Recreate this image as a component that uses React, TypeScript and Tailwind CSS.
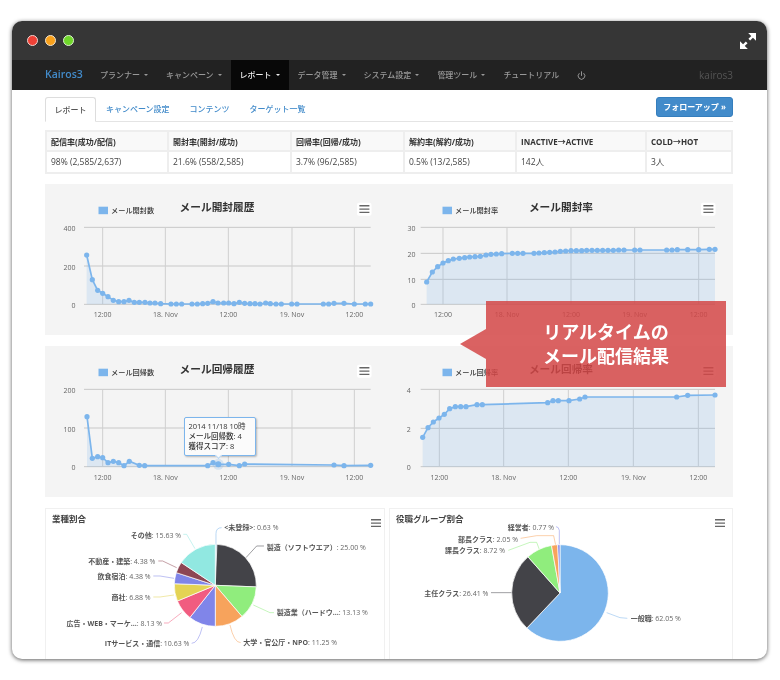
import { Power } from "lucide-react"

type Pt = number[]

const navItems = [
  { label: "プランナー", caret: true },
  { label: "キャンペーン", caret: true },
  { label: "レポート", caret: true, active: true },
  { label: "データ管理", caret: true },
  { label: "システム設定", caret: true },
  { label: "管理ツール", caret: true },
  { label: "チュートリアル" },
]

const summary = [
  ["配信率(成功/配信)", "98% (2,585/2,637)"],
  ["開封率(開封/成功)", "21.6% (558/2,585)"],
  ["回帰率(回帰/成功)", "3.7% (96/2,585)"],
  ["解約率(解約/成功)", "0.5% (13/2,585)"],
  ["INACTIVE→ACTIVE", "142人"],
  ["COLD→HOT", "3人"],
]

// chart data is kept in 3x coordinates, as measured
const openCount: Pt[] = [[140,210],[157,284],[173,316],[188,325],[204,335],[220,346],[236,350],[252,350],[267,346],[283,352],[298,352],[315,352],[330,354],[345,354],[362,356],[393,357],[409,357],[425,357],[456,357],[472,357],[488,356],[503,355],[519,350],[534,354],[551,354],[566,354],[582,356],[598,352],[614,355],[630,356],[645,356],[660,357],[677,354],[691,356],[708,357],[724,357],[755,357],[771,357],[850,357],[866,357],[882,355],[912,355],[943,357],[976,357],[992,357]]
const openRate: Pt[] = [[110,291],[127,261],[143,245],[159,234],[175,227],[190,222],[208,220],[224,218],[239,216],[255,215],[271,214],[288,210],[303,208],[319,207],[335,206],[367,205],[383,205],[399,205],[432,205],[447,204],[463,203],[479,202],[495,201],[511,199],[527,198],[543,197],[559,197],[575,197],[590,196],[606,196],[622,196],[638,196],[654,196],[670,196],[686,195],[702,195],[734,195],[750,195],[830,195],[846,195],[862,194],[893,194],[926,194],[958,193],[975,193]]
const returnCount: Pt[] = [[141,215],[157,340],[173,335],[188,338],[204,353],[220,349],[236,353],[252,362],[268,349],[298,361],[314,362],[503,362],[519,353],[535,358],[566,358],[598,362],[614,357],[882,360],[912,362],[992,361]]
const returnRate: Pt[] = [[98,157],[114,128],[130,111],[147,99],[163,88],[179,71],[196,65],[212,65],[228,65],[261,59],[277,59],[473,53],[489,47],[505,47],[537,47],[569,42],[585,36],[860,36],[893,31],[975,30]]

const xLabels = ["12:00", "18. Nov", "12:00", "19. Nov", "12:00"]

type ChartProps = {
  title: string
  legend: string
  data: Pt[]
  dx: number
  dy: number
  gridY: number[]
  gridX: number[]
  left: number
  right: number
  yLabels: string[]
  labelEnd: number
  hover?: Pt
}

function MenuIcon({ x, y }: { x: number; y: number }) {
  return (
    <g stroke="#666" strokeWidth="1.4">
      <line x1={x} x2={x + 10} y1={y} y2={y} />
      <line x1={x} x2={x + 10} y1={y + 3.3} y2={y + 3.3} />
      <line x1={x} x2={x + 10} y1={y + 6.6} y2={y + 6.6} />
    </g>
  )
}

function LineChart({ title, legend, data, dx, dy, gridY, gridX, left, right, yLabels, labelEnd, hover }: ChartProps) {
  const sx = (v: number) => v / 3 + dx
  const sy = (v: number) => v / 3 + dy
  const base = sy(gridY[gridY.length - 1])
  const line = data.map((p) => `${sx(p[0])},${sy(p[1])}`).join(" ")
  const area = `${sx(data[0][0])},${base} ${line} ${sx(data[data.length - 1][0])},${base}`

  return (
    <svg width="344" height="151" className="block">
      <text x="172" y="27" textAnchor="middle" fontSize="10.7" fontWeight="700" fill="#333">{title}</text>
      <rect x="53.5" y="22.7" width="9.5" height="7.5" fill="#7cb5ec" />
      <text x="66" y="29.3" fontSize="7.2" fontWeight="500" fill="#333">{legend}</text>
      <rect x="312" y="18.7" width="14.5" height="13" rx="2" fill="#fff" />
      <MenuIcon x={314.4} y={21.8} />

      {gridY.map((g) => (
        <line key={g} x1={sx(left)} x2={sx(right)} y1={sy(g)} y2={sy(g)} stroke="#c8c8c8" />
      ))}
      {gridX.map((g) => (
        <line key={g} x1={sx(g)} x2={sx(g)} y1={sy(gridY[0])} y2={base} stroke="#cfcfcf" />
      ))}
      {yLabels.map((l, i) => (
        <text key={l} x={labelEnd} y={sy(gridY[i]) + 3.8} textAnchor="end" fontSize="7" fill="#666">{l}</text>
      ))}
      {xLabels.map((l, i) => (
        <text key={i} x={sx(gridX[i])} y={base + 13} textAnchor="middle" fontSize="7" fill="#666">{l}</text>
      ))}

      <polygon points={area} fill="#7cb5ec" fillOpacity="0.2" />
      <polyline points={line} fill="none" stroke="#7cb5ec" strokeWidth="1.7" />
      {data.map((p, i) => (
        <circle key={i} cx={sx(p[0])} cy={sy(p[1])} r="2.6" fill="#7cb5ec" />
      ))}
      {hover && (
        <>
          <circle cx={sx(hover[0])} cy={sy(hover[1])} r="5.5" fill="#7cb5ec" fillOpacity="0.25" />
          <circle cx={sx(hover[0])} cy={sy(hover[1])} r="3" fill="#7cb5ec" />
        </>
      )}
    </svg>
  )
}

type Slice = { value: number; color: string }
type PieLabel = {
  name: string
  value: string
  x: number
  y: number
  anchor: "start" | "end"
  path: string
  color: string
}

function slicePath(cx: number, cy: number, r: number, from: number, to: number) {
  const a = (from / 100) * Math.PI * 2 - Math.PI / 2
  const b = (to / 100) * Math.PI * 2 - Math.PI / 2
  const large = to - from > 50 ? 1 : 0
  return `M${cx},${cy} L${cx + r * Math.cos(a)},${cy + r * Math.sin(a)} A${r},${r} 0 ${large} 1 ${cx + r * Math.cos(b)},${cy + r * Math.sin(b)} Z`
}

function PieChart({ width, cx, cy, r, slices, labels, dx, menuX }: { width: number; cx: number; cy: number; r: number; slices: Slice[]; labels: PieLabel[]; dx: number; menuX: number }) {
  const total = slices.reduce((s, p) => s + p.value, 0)
  let acc = 0
  return (
    <svg width={width} height="151" className="block">
      <MenuIcon x={menuX} y={10.8} />
      {labels.map((l) => (
        <path key={l.name} d={l.path} transform={`translate(${dx} -8) scale(0.3333)`} fill="none" stroke={l.color} strokeOpacity="0.7" strokeWidth="2.2" />
      ))}
      {slices.map((s, i) => {
        const from = (acc / total) * 100
        acc += s.value
        const to = (acc / total) * 100
        return <path key={i} d={slicePath(cx, cy, r, from, to)} fill={s.color} stroke="#fff" strokeWidth="0.7" />
      })}
      {labels.map((l) => (
        <text key={l.name} x={l.x / 3 + dx} y={l.y / 3 - 5.5} textAnchor={l.anchor} fontSize="7" fill="#666">
          <tspan fontWeight="700" fill="#555">{l.name}</tspan>: {l.value} %
        </text>
      ))}
    </svg>
  )
}

const industrySlices: Slice[] = [
  { value: 0.63, color: "#7cb5ec" },
  { value: 25, color: "#434348" },
  { value: 13.13, color: "#90ed7d" },
  { value: 11.25, color: "#f7a35c" },
  { value: 10.63, color: "#8085e9" },
  { value: 8.13, color: "#f15c80" },
  { value: 6.88, color: "#e4d354" },
  { value: 4.38, color: "#8085e8" },
  { value: 4.38, color: "#8d4653" },
  { value: 15.63, color: "#91e8e1" },
]

const industryLabels: PieLabel[] = [
  { name: "<未登録>", value: "0.63", x: 553, y: 80, anchor: "start", color: "#7cb5ec", path: "M528,132 L528,98 Q528,80 545,80" },
  { name: "製造（ソフトウエア）", value: "25.00", x: 680, y: 138, anchor: "start", color: "#434348", path: "M618,170 L650,135 L672,135" },
  { name: "製造業（ハードウ...", value: "13.13", x: 710, y: 335, anchor: "start", color: "#90ed7d", path: "M640,312 L690,335 L702,335" },
  { name: "大学・官公庁・NPO", value: "11.25", x: 610, y: 425, anchor: "start", color: "#f7a35c", path: "M570,372 Q582,425 602,425" },
  { name: "ITサービス・通信", value: "10.63", x: 448, y: 427, anchor: "end", color: "#8085e9", path: "M487,378 Q475,427 455,427" },
  { name: "広告・WEB・マーケ...", value: "8.13", x: 366, y: 366, anchor: "end", color: "#f15c80", path: "M425,335 L385,366 L372,366" },
  { name: "商社", value: "6.88", x: 332, y: 290, anchor: "end", color: "#e4d354", path: "M402,282 L360,288 L340,288" },
  { name: "飲食宿泊", value: "4.38", x: 332, y: 227, anchor: "end", color: "#8085e8", path: "M402,232 L360,225 L340,225" },
  { name: "不動産・建築", value: "4.38", x: 346, y: 182, anchor: "end", color: "#8d4653", path: "M410,200 L368,180 L355,180" },
  { name: "その他", value: "15.63", x: 423, y: 102, anchor: "end", color: "#91e8e1", path: "M465,143 L440,100 L430,100" },
]

const roleSlices: Slice[] = [
  { value: 62.05, color: "#7cb5ec" },
  { value: 26.41, color: "#434348" },
  { value: 8.72, color: "#90ed7d" },
  { value: 2.05, color: "#f7a35c" },
  { value: 0.77, color: "#8085e9" },
]

const roleLabels: PieLabel[] = [
  { name: "経営者", value: "0.77", x: 492, y: 80, anchor: "end", color: "#8085e9", path: "M508,132 L508,88 Q506,77 498,77" },
  { name: "部長クラス", value: "2.05", x: 384, y: 115, anchor: "end", color: "#f7a35c", path: "M497,132 L491,104 L440,104 L392,112" },
  { name: "課長クラス", value: "8.72", x: 345, y: 149, anchor: "end", color: "#90ed7d", path: "M448,145 L440,124 L420,124 L355,148" },
  { name: "主任クラス", value: "26.41", x: 295, y: 277, anchor: "end", color: "#434348", path: "M368,275 L303,275" },
  { name: "一般職", value: "62.05", x: 722, y: 353, anchor: "start", color: "#7cb5ec", path: "M650,335 L690,350 L712,352" },
]

export default function App() {
  return (
    <div className="w-[780px] h-[680px] bg-white pt-[21px] pl-[12px] overflow-hidden font-['Open_Sans','Noto_Sans_CJK_JP',sans-serif] text-[8px] text-[#333]">
      <div className="relative w-[755px] h-[638px] rounded-[10px] overflow-hidden bg-white shadow-[0_1px_4px_rgba(0,0,0,0.65)] blur-[0.25px]">
        {/* window bar */}
        <div className="h-[39px] bg-[#363636] flex items-center justify-between pl-[15px] pr-[11px]">
          <div className="flex gap-[7px]">
            <span className="w-[11px] h-[11px] rounded-full bg-[#ef4136] border border-[#f3d5d0]" />
            <span className="w-[11px] h-[11px] rounded-full bg-[#f9a11b] border border-[#f3e5d0]" />
            <span className="w-[11px] h-[11px] rounded-full bg-[#6fd62a] border border-[#dff3d0]" />
          </div>
          <svg width="16" height="16" viewBox="0 0 16 16" className="block">
            <polygon points="8.2,0 16,0 16,7.8" fill="#fff" />
            <polygon points="0,8.2 0,16 7.8,16" fill="#fff" />
            <line x1="13" y1="3" x2="9.3" y2="6.7" stroke="#fff" strokeWidth="2.4" />
            <line x1="3" y1="13" x2="6.7" y2="9.3" stroke="#fff" strokeWidth="2.4" />
          </svg>
        </div>

        {/* nav */}
        <div className="h-[30px] bg-[#222] flex items-center pl-[33px] pr-[34px]">
          <span className="w-[46px] text-[10.5px] font-semibold text-[#428bca]">Kairos3</span>
          {navItems.map((item) => (
            <div
              key={item.label}
              className={`h-[30px] flex items-center gap-[4px] px-[9px] text-[8px] font-medium ${item.active ? "bg-[#080808] text-[#eee]" : "text-[#999]"}`}
            >
              {item.label}
              {item.caret && <span className="w-0 h-0 border-x-[2px] border-x-transparent border-t-[2px] border-t-current" />}
            </div>
          ))}
          <div className="px-[9px] text-[#bbb]">
            <Power size={9} strokeWidth={2} />
          </div>
          <span className="ml-auto text-[10px] text-[#555]">kairos3</span>
        </div>

        <div className="w-[688px] ml-[33px] pt-[7px]">
          {/* tabs */}
          <div className="relative flex h-[25px] border-b border-[#e4e4e4]">
            <div className="h-[25px] w-[51px] flex items-center justify-center bg-white border border-[#ddd] border-b-white rounded-t-[3px] text-[#555] font-medium">レポート</div>
            <div className="px-[10px] flex items-center text-[#428bca] font-medium">キャンペーン設定</div>
            <div className="px-[10px] flex items-center text-[#428bca] font-medium">コンテンツ</div>
            <div className="px-[10px] flex items-center text-[#428bca] font-medium">ターゲット一覧</div>
            <button className="ml-auto h-[20px] w-[77px] rounded-[3px] bg-[#428bca] border border-[#357ebd] text-white font-bold text-[8px]">フォローアップ »</button>
          </div>

          {/* summary table */}
          <div className="mt-[8px] grid grid-cols-[122px_123px_113px_112px_130px_84px] border-2 border-[#eee]">
            {summary.map(([head], i) => (
              <div key={i} className={`h-[20px] px-[4px] pt-[1px] flex items-center bg-[#f9f9f9] font-bold border-b-2 border-[#eee] ${i < 5 ? "border-r-2" : ""}`}>
                {head}
              </div>
            ))}
            {summary.map(([, val], i) => (
              <div key={i} className={`h-[20px] px-[4px] pt-[1px] flex items-center text-[8.5px] text-[#444] border-[#eee] ${i < 5 ? "border-r-2" : ""}`}>
                {val}
              </div>
            ))}
          </div>

          {/* line charts */}
          <div className="mt-[10px] grid grid-cols-2 bg-[#f4f4f4] h-[151px]">
            <LineChart title="メール開封履歴" legend="メール開封数" data={openCount} dx={-5} dy={1} gridY={[127, 243, 358]} gridX={[188, 376, 565, 756, 943]} left={132} right={992} yLabels={["400", "200", "0"]} labelEnd={30.5} />
            <LineChart title="メール開封率" legend="メール開封率" data={openRate} dx={1} dy={1} gridY={[127, 205, 283, 358]} gridX={[159, 351, 543, 734, 926]} left={92} right={975} yLabels={["30", "20", "10", "0"]} labelEnd={26.5} />
          </div>
          <div className="mt-[11px] grid grid-cols-2 bg-[#f4f4f4] h-[151px]">
            <div className="relative">
              <LineChart title="メール回帰履歴" legend="メール回帰数" data={returnCount} dx={-5} dy={-1} gridY={[133, 249, 365]} gridX={[188, 376, 565, 756, 943]} left={132} right={992} yLabels={["200", "100", "0"]} labelEnd={30.5} hover={[535, 358]} />
              {/* tooltip */}
              <div className="absolute left-[138.5px] top-[71px] w-[72px] h-[39px] rounded-[2px] border border-[#7cb5ec] bg-[#fbfbfb] pl-[4px] pt-[3px] text-[7.5px] leading-[10px] text-[#333] shadow-[1px_1px_2px_rgba(0,0,0,0.25)]">
                <div>2014 11/18 10時</div>
                <div className="font-medium">メール回帰数: 4</div>
                <div className="font-medium">獲得スコア: 8</div>
                <span className="absolute left-[31px] bottom-[-3px] w-[5px] h-[5px] rotate-45 bg-[#fbfbfb] border-r border-b border-[#b9d6f3]" />
              </div>
            </div>
            <LineChart title="メール回帰率" legend="メール回帰率" data={returnRate} dx={1} dy={39} gridY={[13, 130, 245]} gridX={[148, 341, 535, 730, 925]} left={92} right={975} yLabels={["4", "2", "0"]} labelEnd={21.7} />
          </div>

          {/* pies */}
          <div className="mt-[11px] flex justify-between">
            <div className="relative w-[340px] h-[151px] border-l border-t border-r border-[#f0f0f0]">
              <div className="absolute left-[6px] top-[4px] text-[8.5px] font-bold text-[#444]">業種割合</div>
              <PieChart width={338} cx={169.3} cy={76.3} r={41} slices={industrySlices} labels={industryLabels} dx={-6} menuX={325} />
            </div>
            <div className="relative w-[344px] h-[151px] border-l border-t border-r border-[#f0f0f0]">
              <div className="absolute left-[6px] top-[4px] text-[8.5px] font-bold text-[#444]">役職グループ割合</div>
              <PieChart width={342} cx={170} cy={84} r={48.3} slices={roleSlices} labels={roleLabels} dx={0} menuX={325} />
            </div>
          </div>
        </div>

        {/* callout */}
        <div className="absolute left-[474px] top-[280px] w-[240px] h-[86px] bg-[rgba(212,70,70,0.85)] flex flex-col items-center justify-center text-white text-[18px] leading-[24px] font-bold">
          <span className="block">リアルタイムの</span>
          <span className="block">メール配信結果</span>
          <span className="absolute left-[-26px] top-[28px] w-0 h-0 border-y-[15px] border-y-transparent border-r-[26px] border-r-[rgba(212,70,70,0.85)]" />
        </div>
      </div>
    </div>
  )
}
